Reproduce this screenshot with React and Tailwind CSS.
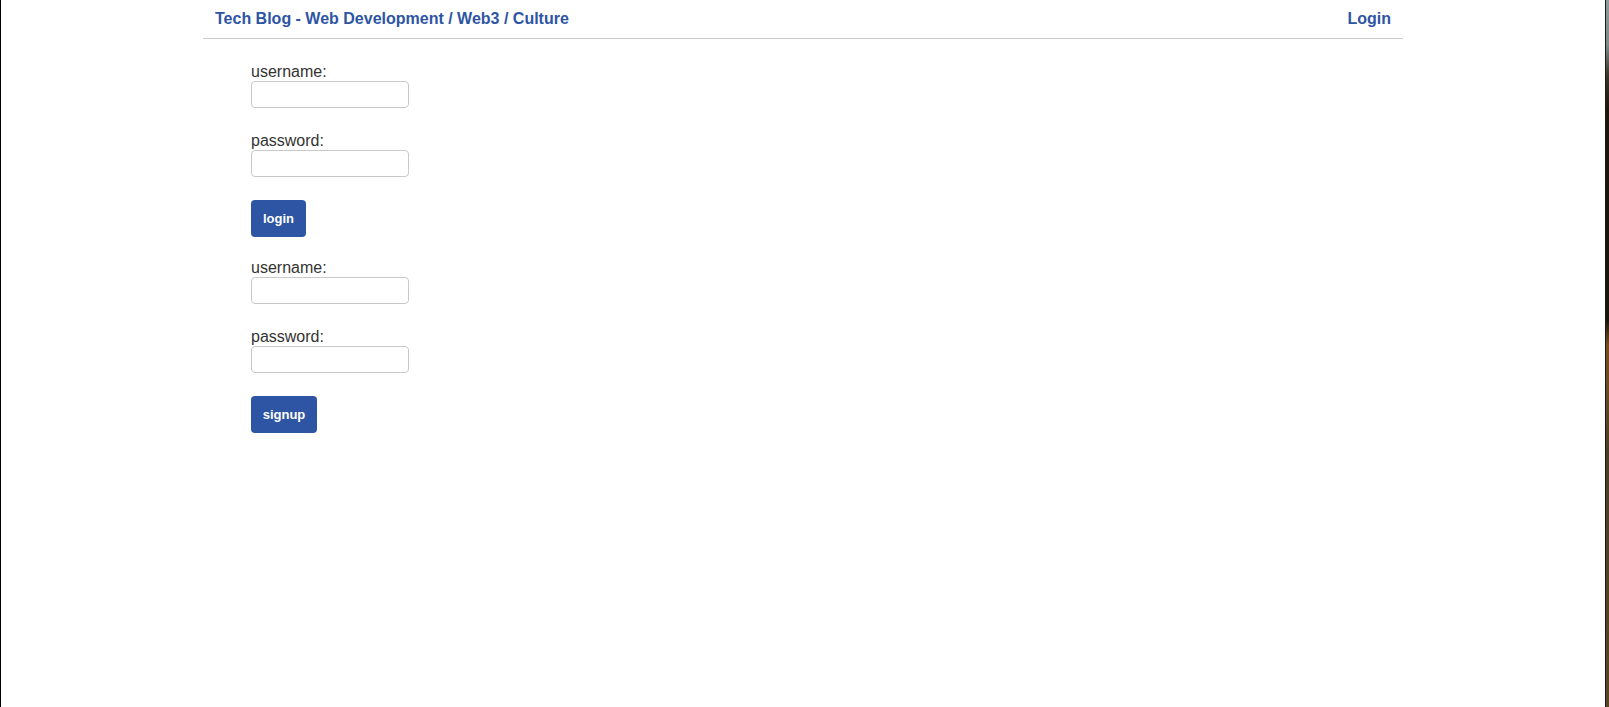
import React from "react";

function Field({ label, type = "text", gap }) {
  return (
    <div className={gap}>
      <label className="block h-[18px] leading-[18px] text-[16px] text-[#333333]">{label}</label>
      <input
        type={type}
        className="block h-[27px] w-[158px] rounded-[4px] border border-[#c9c9c9] bg-white px-2 outline-none"
      />
    </div>
  );
}

function Form({ button, btnWidth }) {
  return (
    <form className="mb-[22px]" onSubmit={(e) => e.preventDefault()}>
      <Field label="username:" gap="mb-[24px]" />
      <Field label="password:" type="password" gap="mb-[23px]" />
      <button
        type="submit"
        className={`h-[37px] ${btnWidth} rounded-[4px] bg-[#2d55a3] text-[13px] font-bold text-white`}
      >
        {button}
      </button>
    </form>
  );
}

export default function App() {
  return (
    <div
      className="flex h-screen min-h-[707px] w-full bg-white"
      style={{ fontFamily: '"Liberation Sans", Arial, Helvetica, sans-serif' }}
    >
      <div className="w-px shrink-0 bg-black" />
      <main className="flex-1 bg-white">
        <div className="mx-auto w-[1200px]">
          <header className="flex h-[39px] items-center justify-between border-b border-[#cccccc] px-3 pb-px">
            <a href="#" className="text-[16px] font-bold leading-[18px] text-[#2d55a3]">
              Tech Blog - Web Development / Web3 / Culture
            </a>
            <a href="#" className="text-[16px] font-bold leading-[18px] text-[#2d55a3]">
              Login
            </a>
          </header>
          <div className="pl-[48px] pt-[24px]">
            <Form button="login" btnWidth="w-[55px]" />
            <Form button="signup" btnWidth="w-[66px]" />
          </div>
        </div>
      </main>
      <div className="w-px shrink-0 bg-[#1a1a1a]" />
      <div className="w-[3px] shrink-0 bg-[linear-gradient(to_bottom,#8d9c9c_0px,#7d8b8a_45px,#3a3526_75px,#1c1508_110px,#1a1408_320px,#7a4b1c_345px,#6a4a22_390px,#4c3d22_450px,#5a4526_707px)]" />
    </div>
  );
}
